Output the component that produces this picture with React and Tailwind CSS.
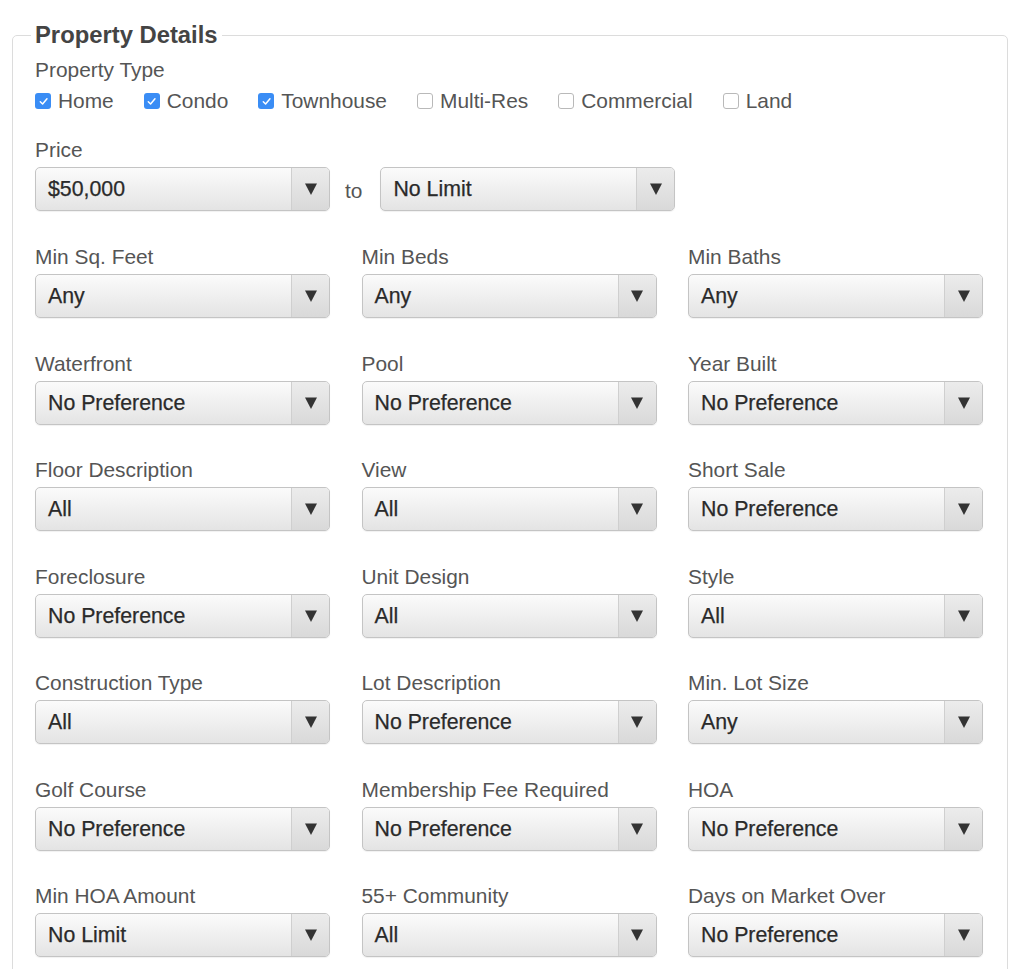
import React from 'react';

const types = [
  { name: 'Home', checked: true },
  { name: 'Condo', checked: true },
  { name: 'Townhouse', checked: true },
  { name: 'Multi-Res', checked: false },
  { name: 'Commercial', checked: false },
  { name: 'Land', checked: false },
];

const fields = [
  ['Min Sq. Feet', 'Any'],
  ['Min Beds', 'Any'],
  ['Min Baths', 'Any'],
  ['Waterfront', 'No Preference'],
  ['Pool', 'No Preference'],
  ['Year Built', 'No Preference'],
  ['Floor Description', 'All'],
  ['View', 'All'],
  ['Short Sale', 'No Preference'],
  ['Foreclosure', 'No Preference'],
  ['Unit Design', 'All'],
  ['Style', 'All'],
  ['Construction Type', 'All'],
  ['Lot Description', 'No Preference'],
  ['Min. Lot Size', 'Any'],
  ['Golf Course', 'No Preference'],
  ['Membership Fee Required', 'No Preference'],
  ['HOA', 'No Preference'],
  ['Min HOA Amount', 'No Limit'],
  ['55+ Community', 'All'],
  ['Days on Market Over', 'No Preference'],
];

// fake select box with the old-style gradient + arrow cell
const Select = ({ value }) => (
  <div className="flex h-[44px] w-[295px] items-stretch rounded-[5px] border border-[#c4c4c4] bg-gradient-to-b from-[#fbfbfb] to-[#e4e4e4] shadow-[0_1px_1px_rgba(0,0,0,0.06)]">
    <div className="flex flex-1 items-center pl-[12px] pt-[2px] text-[21.3px] text-[#2a2a2a] [-webkit-text-stroke:0.25px_#2a2a2a]">{value}</div>
    <div className="flex w-[38px] items-center justify-center rounded-r-[4px] border-l border-[#cfcfcf] bg-gradient-to-b from-[#ececec] to-[#d9d9d9]">
      <svg width="12" height="12" viewBox="0 0 12 12">
        <path d="M0 0.5 L12 0.5 L6 12 Z" fill="#333" />
      </svg>
    </div>
  </div>
);

const Checkbox = ({ checked }) =>
  checked ? (
    <span className="flex h-[16px] w-[16px] items-center justify-center rounded-[3px] bg-[#3a8df5]">
      <svg width="11" height="11" viewBox="0 0 12 12">
        <path d="M2.5 6.3 L5 8.8 L9.8 3" fill="none" stroke="#fff" strokeWidth="1.6" strokeLinecap="round" strokeLinejoin="round" />
      </svg>
    </span>
  ) : (
    <span className="h-[16px] w-[16px] rounded-[3px] border border-[#b9b9b9] bg-white" />
  );

export default function App() {
  return (
    <div className="min-h-[969px] bg-white pt-[23px] font-['Liberation_Sans',Arial,sans-serif]">
      <fieldset className="ml-[12px] w-[996px] rounded-[5px] border border-[#dcdcdc] pl-[22px] pb-[30px]">
        <legend className="-ml-[4px] px-[4px] text-[23.8px] font-bold leading-[24px] text-[#444]">Property Details</legend>

        <div className="mt-[11px] text-[20.9px] leading-[24px] text-[#555]">Property Type</div>
        <div className="mt-[7px] flex h-[24px] items-center text-[20.9px] text-[#555]">
          {types.map((t) => (
            <label key={t.name} className="mr-[30px] flex items-center gap-[7px]">
              <Checkbox checked={t.checked} />
              <span>{t.name}</span>
            </label>
          ))}
        </div>

        <div className="mt-[25px] text-[20.9px] leading-[24px] text-[#555]">Price</div>
        <div className="mt-[5px] flex items-center">
          <Select value="$50,000" />
          <span className="ml-[15px] mr-[18px] pt-[4px] text-[20.9px] text-[#555]">to</span>
          <Select value="No Limit" />
        </div>

        <div className="mt-[34px] grid grid-cols-[295px_295px_295px] gap-x-[31.5px] gap-y-[33.5px]">
          {fields.map(([label, value]) => (
            <div key={label}>
              <div className="text-[20.9px] leading-[24px] text-[#555]">{label}</div>
              <div className="mt-[5px]">
                <Select value={value} />
              </div>
            </div>
          ))}
        </div>
      </fieldset>
    </div>
  );
}
